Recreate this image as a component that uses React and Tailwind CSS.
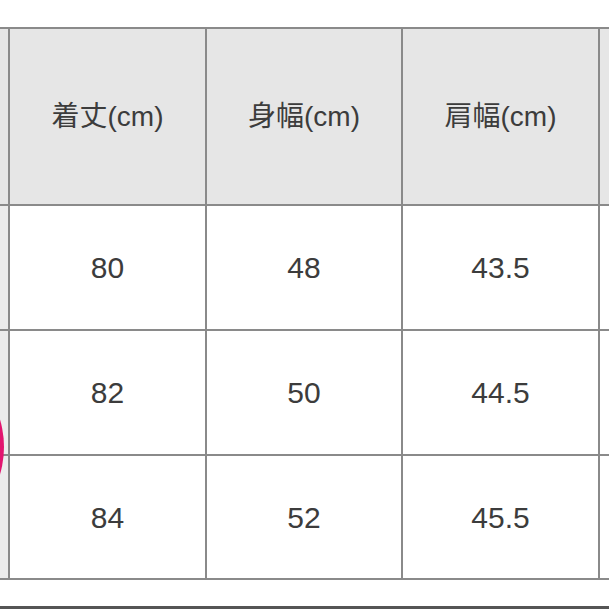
export default function App() {
  const headers = ["着丈(cm)", "身幅(cm)", "肩幅(cm)"];
  const rows = [
    ["80", "48", "43.5"],
    ["82", "50", "44.5"],
    ["84", "52", "45.5"],
  ];

  return (
    <div
      className="relative w-[609px] h-[609px] overflow-hidden bg-white text-[#3c3c3c]"
      style={{ fontFamily: '"Liberation Sans", "Noto Sans CJK JP", sans-serif' }}
    >
      <div className="h-[27px]" />
      {/* Size table */}
      <div className="grid grid-cols-[8px_195px_194px_195px_1fr] grid-rows-[175px_123px_123px_122px] gap-[2px] py-[2px] bg-[#8a8a8a]">
        <div className="bg-[#e6e6e6]" />
        {headers.map((h) => (
          <div key={h} className="bg-[#e6e6e6] flex items-center justify-center text-[28px]">
            {h}
          </div>
        ))}
        <div className="bg-[#e6e6e6]" />
        {rows.map((row, i) => (
          <div key={i} className="contents">
            <div className="bg-[#ececec]" />
            {row.map((v, j) => (
              <div key={j} className="bg-white flex items-center justify-center text-[30px]">
                {v}
              </div>
            ))}
            <div className="bg-white" />
          </div>
        ))}
      </div>
      <div className="h-[26px]" />
      <div className="h-[3px] bg-[#555]" />
      {/* pink marker peeking in from the left */}
      <div className="absolute left-[-188px] top-[351px] w-[192px] h-[192px] rounded-full bg-[#e2156f]" />
    </div>
  );
}
